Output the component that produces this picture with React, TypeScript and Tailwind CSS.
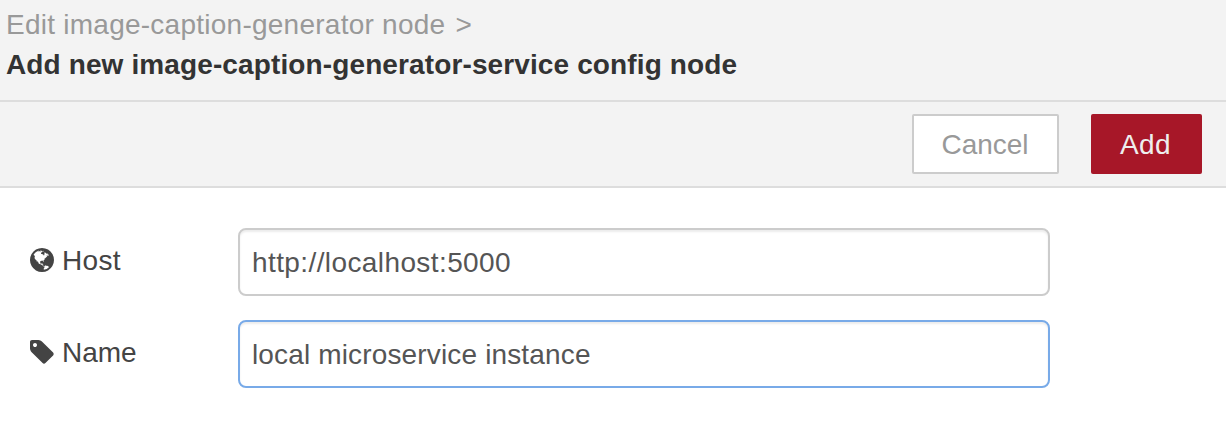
function GlobeIcon() {
  return (
    <svg className="size-6 shrink-0" viewBox="0 128 1536 1536" fill="currentColor" aria-hidden="true">
      <path d="M768 128q209 0 385.5 103t279.5 279.5 103 385.5-103 385.5-279.5 279.5-385.5 103-385.5-103-279.5-279.5-103-385.5 103-385.5 279.5-279.5 385.5-103zm274 521q-2 1-9.5 9.5t-13.5 9.5q2 0 4.5-5t5-11 3.5-7q6-7 22-15 14-6 52-12 34-8 51 11-2-2 9.5-13t14.5-12q3-2 15-4.5t15-7.5l2-22q-12 1-17.5-7t-6.5-21q0 2-6 8 0-7-4.5-8t-11.5 1-9 1q-10-3-15-7.5t-8-16.5-4-15q-2-5-9.5-11t-9.5-10q-1-2-2.5-5.5t-3-6.5-4-5.5-5.5-2.5-7 5-7.5 10-4.5 5q-3-2-6-1.5t-4.5 1-4.5 3-5 3.5q-3 2-8.5 3t-8.5 2q15-5-1-11-10-4-16-3 9-4 7.5-12t-8.5-14h5q-1-4-8.5-8.5t-17.5-8.5-13-6q-8-5-34-9.5t-33-.5q-5 6-4.5 10.5t4 14 3.5 12.5q1 6-5.5 13t-6.5 12q0 7 14 15.5t10 21.5q-3 8-16 16t-16 12q-5 8-1.5 18.5t10.5 16.5q2 2 1.5 4t-3.5 4.5-5.5 4-6.5 3.5l-3 2q-11 5-20.5-6t-13.5-26q-7-25-16-30-23-8-29 1-5-13-41-26-25-9-58-4 6-1 0-15-7-15-19-12 3-6 4-17.5t1-13.5q3-13 12-23 1-1 7-8.5t9.5-13.5.5-6q35 4 50-11 5-5 11.5-17t10.5-17q9-6 14-5.5t14.5 5.5 14.5 5q14 1 15.5-11t-7.5-20q12 1 3-17-4-7-8-9-12-4-27 5-8 4 2 8-1-1-9.5 10.5t-16.5 17.5-16-5q-1-1-5.5-13.5t-9.5-13.5q-8 0-16 15 3-8-11-15t-24-8q19-12-8-27-7-4-20.5-5t-19.5 4q-5 7-5.5 11.5t5 8 10.5 5.5 11.5 4 8.5 3q14 10 8 14-2 1-8.5 3.5t-11.5 4.5-6 4q-3 4 0 14t-2 14q-5-5-9-17.5t-7-16.5q7 9-25 6l-10-1q-4 0-16 2t-20.5 1-13.5-8q-4-8 0-20 1-4 4-2-4-3-11-9.5t-10-8.5q-46 15-94 41 6 1 12-1 5-2 13-6.5t10-5.5q34-14 42-7l5-5q14 16 20 25-7-4-30-1-20 6-22 12 7 12 5 18-4-3-11.5-10t-14.5-11-15-5q-16 0-22 1-146 80-235 222 7 7 12 8 4 1 5 9t2.5 11 11.5-3q9 8 3 19 1-1 44 27 19 17 21 21 3 11-10 18-1-2-9-9t-9-4q-3 5 .5 18.5t10.5 12.5q-7 0-9.5 16t-2.5 35.5-1 23.5l2 1q-3 12 5.5 34.5t21.5 19.5q-13 3 20 43 6 8 8 9 3 2 12 7.5t15 10 10 10.5q4 5 10 22.5t14 23.5q-2 6 9.5 20t10.5 23q-1 0-2.5 1t-2.5 1q3 7 15.5 14t15.5 13q1 3 2 10t3 11 8 2q2-20-24-62-15-25-17-29-3-5-5.5-15.5t-4.5-14.5q2 0 6 1.5t8.5 3.5 7.5 4 2 3q-3 7 2 17.5t12 18.5 17 19 12 13q6 6 14 19.5t0 13.5q9 0 20 10.5t17 19.5q5 8 8 26t5 24q2 7 8.5 13.5t12.5 9.5l16 8 13 7q5 2 18.5 10.5t21.5 11.5q10 4 16 4t14.5-2.5 13.5-3.5q15-2 29 15t21 21q36 19 55 11-2 1 .5 7.5t8 15.5 9 14.5 5.5 8.5q5 6 18 15t18 15q6-4 7-9-3 8 7 20t18 10q14-3 14-32-31 15-49-18 0-1-2.5-5.5t-4-8.5-2.5-8.5 0-7.5 5-3q9 0 10-3.5t-2-12.5-4-13q-1-8-11-20t-12-15q-5 9-16 8t-16-9q0 1-1.5 5.5t-1.5 6.5q-13 0-15-1 1-3 2.5-17.5t3.5-22.5q1-4 5.5-12t7.5-14.5 4-12.5-4.5-9.5-17.5-2.5q-19 1-26 20-1 3-3 10.5t-5 11.5-9 7q-7 3-24 2t-24-5q-13-8-22.5-29t-9.5-37q0-10 2.5-26.5t3-25-5.5-24.5q3-2 9-9.5t10-10.5q2-1 4.5-1.5t4.5 0 4-1.5 3-6q-1-1-4-3-3-3-4-3 7 3 28.5-1.5t27.5 1.5q15 11 22-2 0-1-2.5-9.5t-.5-13.5q5 27 29 9 3 3 15.5 5t17.5 5q3 2 7 5.5t5.5 4.5 5-.5 8.5-6.5q10 14 12 24 11 40 19 44 7 3 11 2t4.5-9.5 0-14-1.5-12.5l-1-8v-18l-1-8q-15-3-18.5-12t1.5-18.5 15-18.5q1-1 8-3.5t15.5-6.5 12.5-8q21-19 15-35 7 0 11-9-1 0-5-3t-7.5-5-4.5-2q9-5 2-16 5-3 7.5-11t7.5-10q9 12 21 2 8-8 1-16 5-7 20.5-10.5t18.5-9.5q7 2 8-2t1-12 3-12q4-5 15-9t13-5l17-11q3-4 0-4 18 2 31-11 10-11-6-20 3-6-3-9.5t-15-5.5q3-1 11.5-.5t10.5-1.5q15-10-7-16-17-5-43 12zm-163 877q206-36 351-189-3-3-12.5-4.5t-12.5-3.5q-18-7-24-8 1-7-2.5-13t-8-9-12.5-8-11-7q-2-2-7-6t-7-5.5-7.5-4.5-8.5-2-10 1l-3 1q-3 1-5.5 2.5t-5.5 3-4 3 0 2.5q-21-17-36-22-5-1-11-5.5t-10.5-7-10-1.5-11.5 7q-5 5-6 15t-2 13q-7-5 0-17.5t2-18.5q-3-6-10.5-4.5t-12 4.5-11.5 8.5-9 6.5-8.5 5.5-8.5 7.5q-3 4-6 12t-5 11q-2-4-11.5-6.5t-9.5-5.5q2 10 4 35t5 38q7 31-12 48-27 25-29 40-4 22 12 26 0 7-8 20.5t-7 21.5q0 6 2 16z" />
    </svg>
  );
}

function TagIcon() {
  return (
    <svg className="size-6 shrink-0" viewBox="-64 128 1536 1536" fill="currentColor" aria-hidden="true">
      <path d="M384 448q0-53-37.5-90.5t-90.5-37.5-90.5 37.5-37.5 90.5 37.5 90.5 90.5 37.5 90.5-37.5 37.5-90.5zm1067 576q0 53-37 90l-491 492q-39 37-91 37-53 0-90-37l-715-716q-38-37-64.5-101t-26.5-117v-416q0-52 38-90t90-38h416q53 0 117 26.5t102 64.5l715 714q37 39 37 91z" />
    </svg>
  );
}

export default function App() {
  return (
    <div className="h-[424px] w-[1226px] overflow-hidden bg-white font-['Liberation_Sans',Arial,sans-serif] text-[28px] text-[#444]">
      <header className="h-[102px] border-b-2 border-[#ddd] bg-[#f3f3f3] pl-[6px] pt-[5px]">
        <div className="h-10 leading-[40px] tracking-[0.25px] text-[#999]">
          Edit image-caption-generator node <span className="pl-[2px]">&gt;</span>
        </div>
        <div className="h-10 font-bold leading-[40px] tracking-[0.12px] text-[#333]">Add new image-caption-generator-service config node</div>
      </header>
      <div className="flex h-[86px] justify-end gap-8 border-b-2 border-[#ddd] bg-[#f3f3f3] pr-6 pt-3">
        <button className="h-[60px] w-[147px] rounded-[2px] border-2 border-[#ccc] bg-white pr-px pt-[2px] text-[#999]">Cancel</button>
        <button className="h-[60px] w-[111px] rounded-[2px] bg-[#a71728] pr-[2px] pt-[2px] tracking-[0.4px] text-[#eee]">Add</button>
      </div>
      <form className="flex flex-col gap-6 pl-[30px] pt-10">
        <div className="flex">
          <label className="flex h-16 w-[208px] items-center gap-[8px] tracking-[0.3px]">
            <GlobeIcon />
            <span className="pt-[2px]">Host</span>
          </label>
          <input className="h-[68px] w-[812px] rounded-lg border-2 border-[#ccc] px-[12px] pt-[2px] tracking-[0.4px] text-[#555] shadow-[inset_0_2px_2px_rgba(0,0,0,0.075)] outline-none" defaultValue="http://localhost:5000" />
        </div>
        <div className="flex">
          <label className="flex h-16 w-[208px] items-center gap-[8px]">
            <TagIcon />
            <span className="pt-[2px]">Name</span>
          </label>
          <input className="h-[68px] w-[812px] rounded-lg border-2 border-[#78aae8] px-[12px] pt-[2px] tracking-[0.15px] text-[#555] shadow-[inset_0_2px_2px_rgba(0,0,0,0.075)] outline-none" defaultValue="local microservice instance" />
        </div>
      </form>
    </div>
  );
}
